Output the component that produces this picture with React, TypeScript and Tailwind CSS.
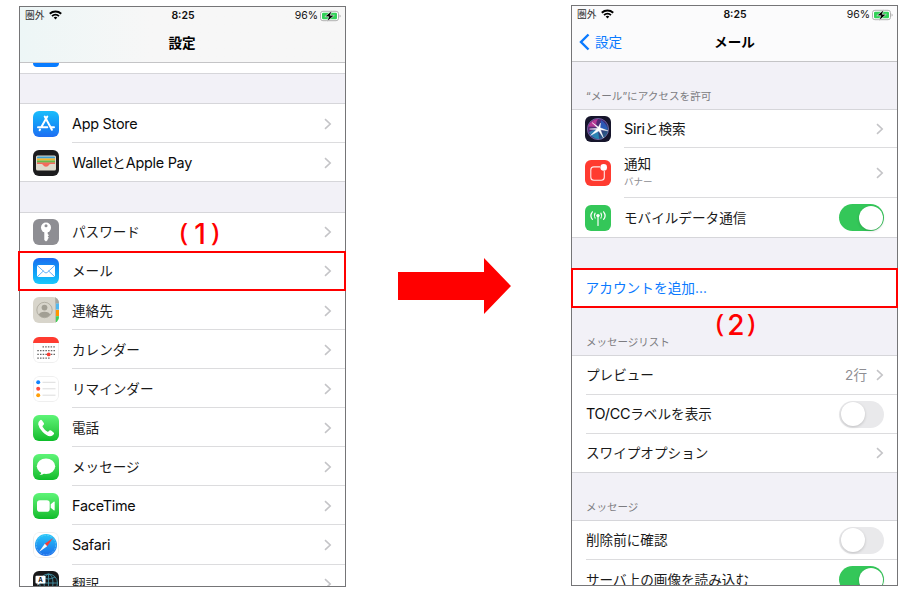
import type { ReactNode } from 'react';

const FONT = "font-['Inter','Noto_Sans_CJK_JP',sans-serif]";

/* ---------- Text ---------- */

// Latin runs are set slightly larger than the Japanese ones
function Label({ text }: { text: string }) {
  const runs = text.match(/[\x20-\x7e]+|[^\x20-\x7e]+/g) || [];
  return (
    <span className="whitespace-nowrap leading-[20px] text-[13.6px] text-[#1a1a1a]">
      {runs.map((run, i) => (
        <span key={i} className={/^[\x20-\x7e]/.test(run) ? 'text-[14.4px] tracking-[-0.25px] text-[#0c0c0c]' : ''}>
          {run}
        </span>
      ))}
    </span>
  );
}

/* ---------- Small parts ---------- */

function Chevron() {
  return (
    <svg width="8" height="12" viewBox="0 0 8 12" fill="none" className="shrink-0">
      <path d="M1 1.200 6.200 6 1 10.800" stroke="#c4c4c7" strokeWidth="1.600" />
    </svg>
  );
}

function Toggle({ on = false }: { on?: boolean }) {
  return (
    <span
      className={
        on
          ? 'flex h-[27px] w-[45px] shrink-0 items-center justify-end rounded-full bg-[#34c759] p-[1.5px]'
          : 'flex h-[27px] w-[45px] shrink-0 items-center rounded-full bg-[#e9e9eb] p-[1.5px]'
      }
    >
      <span className="size-[24px] rounded-full bg-white shadow-[0_1px_3px_rgba(0,0,0,0.18)]" />
    </span>
  );
}

function StatusBar() {
  return (
    <div className="flex h-[17px] items-center justify-between pl-[5px] pr-[4px] pt-px text-[10.5px] leading-none text-[#111]">
      <div className="flex w-[60px] items-center gap-[4px]">
        <span className="text-[9.8px] text-[#333]">圏外</span>
        <svg width="13" height="10" viewBox="0 0 13 10" fill="none" stroke="#000" className="-mt-px">
          <path d="M.8 3.7a8.4 8.4 0 0 1 11.4 0" strokeWidth="2" />
          <path d="M3 6.1a5.2 5.2 0 0 1 7 0" strokeWidth="1.8" />
          <path d="M4.7 7.6a2.6 2.6 0 0 1 3.6 0L6.5 9.6z" fill="#000" stroke="none" />
        </svg>
      </div>
      <span className="pt-px font-semibold">8:25</span>
      <div className="flex w-[60px] items-center justify-end gap-[2px]">
        <span className="pt-px">96%</span>
        <svg width="21" height="12" viewBox="0 0 21 12" className="-mt-px">
          <rect x=".5" y="1.3" width="18" height="9.4" rx="2.4" fill="#fff" stroke="#b0b0b0" />
          <rect x="2" y="2.8" width="15" height="6.4" rx="1.2" fill="#32d158" />
          <path d="M19.6 4.5v3q1-.5 1-1.5T19.6 4.5" fill="#a5a5a5" />
          <path d="M12 .5 4.8 6.7h3.9L7 11.7l7.3-6.4h-4z" fill="#000" stroke="#fff" strokeWidth=".6" />
        </svg>
      </div>
    </div>
  );
}

/* ---------- App icons ---------- */

function Icon({ children, className = '' }: { children: ReactNode; className?: string }) {
  return (
    <svg viewBox="0 0 26 26" className={`size-[26px] shrink-0 overflow-hidden rounded-[6px] ${className}`}>
      {children}
    </svg>
  );
}

const AppStoreIcon = () => (
  <Icon className="bg-linear-to-b from-[#1bbdfb] to-[#1f6df2]">
    <g stroke="#fff" strokeWidth="2" strokeLinecap="round" fill="none">
      <path d="M14.3 5.6 8.2 16.2M11.7 5.6l7.2 13.2M5 16.2h9.3M18.2 16.2h2.8M7 18.5l-.4.7" />
    </g>
  </Icon>
);

const WalletIcon = () => (
  <Icon className="bg-[#1c1c1e]">
    <rect x="3" y="5.5" width="20" height="15" rx="1.5" fill="#dedacd" />
    <path d="M4 8.5V7.5q0-1 1-1h16q1 0 1 1v1z" fill="#3f9fd2" />
    <path d="M4 8.5h18v2H4z" fill="#f3b52b" />
    <path d="M4 10.5h18v2.2H4z" fill="#67b84b" />
    <path d="M4 12.5h18V14h-4.500q-1 0-1.500 1-1 1.800-3 1.800t-3-1.800q-.5-1-1.500-1H4z" fill="#f2695c" />
  </Icon>
);

const KeyIcon = () => (
  <Icon className="bg-[#8e8e93]">
    <circle cx="13" cy="8.6" r="5" fill="#fff" />
    <path d="M11.3 12h3.4v3l1.3 1.2-1.3 1.3 1.2 1.3-1.2 1.300v.9L13 22.600 11.300 21z" fill="#fff" />
    <circle cx="13" cy="6.7" r="1.5" fill="#8e8e93" />
  </Icon>
);

const MailIcon = () => (
  <Icon className="bg-linear-to-b from-[#1c6cf0] to-[#1bc8fb]">
    <rect x="4" y="7" width="18" height="12" rx="1.8" fill="#fff" />
    <path d="m4.6 7.8 7.3 6.7q1.1.9 2.2 0l7.3-6.7M4.6 18.4l6-5.6M21.4 18.4l-6-5.6" fill="none" stroke="#3d9df6" strokeWidth=".8" />
  </Icon>
);

const ContactsIcon = () => (
  <Icon className="bg-[#d8d5cb]">
    <circle cx="11.5" cy="13" r="7.7" fill="#d8d5cb" stroke="#a29f94" strokeWidth=".7" />
    <circle cx="11.5" cy="10.6" r="2.9" fill="#a29f94" />
    <path d="M5.8 17.8q1-3 5.700-3t5.700 3q-2.200 2.700-5.700 2.700t-5.700-2.700" fill="#a29f94" />
    <path d="M22 0h4v6.5h-4z" fill="#a6a69f" />
    <path d="M22.7 6.5H26v6h-3.3z" fill="#51b8f0" />
    <path d="M22.7 12.9H26v6h-3.3z" fill="#ff9500" />
    <path d="M22.7 19.3H26V26h-3.3z" fill="#3fd158" />
    <path d="M22 0h.7v26H22z" fill="#bbb8ae" />
  </Icon>
);

const CalendarIcon = () => (
  <Icon className="bg-white">
    <rect x=".5" y=".5" width="25" height="25" rx="5.5" fill="#fff" stroke="#efefef" />
    <path d="M0 0h26v6H0z" fill="#ff3b30" />
    <g stroke="#666" strokeWidth="1.3" strokeDasharray="1.5 1.2">
      <path d="M9.5 9.8H22M4.3 13.6H22M4.3 17.4H22M4.3 21.2h12.5" />
    </g>
    <circle cx="15.7" cy="17.4" r="1.9" fill="#ff3b30" />
  </Icon>
);

const RemindersIcon = () => (
  <Icon className="bg-white">
    <rect x=".5" y=".5" width="25" height="25" rx="5.5" fill="#fff" stroke="#efefef" />
    <path d="M9.5 6.3h13M9.5 12.8h13M9.5 19.2h13" stroke="#dcdcdc" strokeWidth="1" />
    <circle cx="5.2" cy="6.3" r="2" fill="#1283ff" />
    <circle cx="5.2" cy="12.8" r="2" fill="#ff4b40" />
    <circle cx="5.2" cy="19.2" r="2" fill="#ff9f0a" />
  </Icon>
);

const PhoneIcon = () => (
  <Icon className="bg-linear-to-b from-[#5df577] to-[#0abc29]">
    <path
      d="M7.1 5.2q1-.8 1.900.2l1.800 2.600q.6 1-.2 1.800l-.9.9q-.4.6 0 1.300 1.700 2.800 4.400 4.500.7.400 1.300 0l1-.9q.8-.6 1.700 0l2.500 1.800q1 .8.200 1.800-1.600 2-3.700 2-3.400-.3-7.400-4.300T5.200 9.200q-.1-2.300 1.900-4"
      fill="#fff"
    />
  </Icon>
);

const MessagesIcon = () => (
  <Icon className="bg-linear-to-b from-[#5df577] to-[#0abc29]">
    <ellipse cx="13" cy="12.3" rx="9.2" ry="7.8" fill="#fff" />
    <path d="M8.5 17.5q0 2.300-2 3.500 3 .2 5-2z" fill="#fff" />
  </Icon>
);

const FaceTimeIcon = () => (
  <Icon className="bg-linear-to-b from-[#5df577] to-[#0abc29]">
    <rect x="4" y="7.3" width="12.7" height="11.4" rx="2.8" fill="#fff" />
    <path d="m17.7 11.3 3-2.5q1-.6 1 .5v7.400q0 1.100-1 .5l-3-2.500z" fill="#fff" />
  </Icon>
);

const SafariIcon = () => (
  <Icon className="bg-white">
    <defs>
      <linearGradient id="safari" x1="0" y1="0" x2="0" y2="1">
        <stop offset="0" stopColor="#25c8f9" />
        <stop offset="1" stopColor="#1b6bea" />
      </linearGradient>
    </defs>
    <rect x=".5" y=".5" width="25" height="25" rx="5.5" fill="#fff" stroke="#efefef" />
    <circle cx="13" cy="13" r="11" fill="url(#safari)" />
    <circle cx="13" cy="13" r="9.7" fill="none" stroke="#9fdcfb" strokeWidth=".9" strokeDasharray=".5 1.1" />
    <path d="M20 6 11.8 11.8l2.4 2.4z" fill="#fb3e35" />
    <path d="m6 20 8.2-5.8-2.4-2.4z" fill="#f6f6f6" />
  </Icon>
);

const TranslateIcon = () => (
  <Icon className="bg-[#19191b]">
    <g fill="none" stroke="#4a9fb5" strokeWidth=".8">
      <circle cx="15.5" cy="12" r="9" />
      <path d="M15.5 3v18M6.5 12h18M9 6q6.500 4 13 0M9 18q6.500-4 13 0" />
      <ellipse cx="15.5" cy="12" rx="4.5" ry="9" />
    </g>
    <path d="M3.5 4.800h8q1 0 1 1v5.700q0 1-1 1h-5l-2 2v-2h-1q-1 0-1-1V5.800q0-1 1-1" fill="#fff" />
    <text x="5.3" y="10.8" fontSize="6" fontWeight="700" fill="#111">A</text>
  </Icon>
);

const SiriIcon = () => (
  <Icon className="bg-[#16152b]">
    <defs>
      <linearGradient id="siri" x1="0" y1="0" x2="1" y2="1">
        <stop offset="0" stopColor="#d53cab" />
        <stop offset=".5" stopColor="#5b3bb4" />
        <stop offset="1" stopColor="#20c9dd" />
      </linearGradient>
    </defs>
    <circle cx="13" cy="13" r="10.6" fill="url(#siri)" fillOpacity=".55" stroke="#7b6cae" strokeWidth=".8" />
    <path d="M3.200 10.500Q6 3.500 13 3q-3 4-1 8z" fill="#dc3fa4" fillOpacity=".7" />
    <path d="M22.800 13.500Q21 7 16 4q0 5-3 9z" fill="#266bd1" fillOpacity=".7" />
    <path d="M4 16q4-2 9-3l1 10q-7 0-10-7" fill="#25b5d8" fillOpacity=".6" />
    <path
      d="M12.800 12.200 7 6.500l6.500 4.500L15.500 7l-.4 4.800 7.900 3-7.500-1 3 8.200-4.700-7-8.300 4.500 6-6-7-.4z"
      fill="#fff"
      stroke="#fff"
      strokeWidth=".4"
    />
  </Icon>
);

const NotificationIcon = () => (
  <Icon className="bg-[#ff3b30]">
    <path d="M15 6.900H8.800q-3 0-3 3v7.300q0 3 3 3h7.500q3 0 3-3V11" fill="none" stroke="#fff" strokeOpacity=".9" strokeWidth="1.100" />
    <circle cx="18.700" cy="7.400" r="3.300" fill="#fff" />
  </Icon>
);

const AntennaIcon = () => (
  <Icon className="bg-[#34c759]">
    <g fill="none" stroke="#fff" strokeWidth="1.200" strokeLinecap="round">
      <path d="M13 11v9.500M10.100 8.200q-1.600 2.400 0 4.800M15.900 8.200q1.600 2.400 0 4.800M7.400 6.800q-3 3.800 0 7.600M18.600 6.800q3 3.800 0 7.600" />
    </g>
    <circle cx="13" cy="10.600" r="1.700" fill="#fff" />
  </Icon>
);

/* ---------- Rows ---------- */

interface AppRowProps {
  icon: ReactNode;
  text: string;
  last?: boolean;
}

function AppRow({ icon, text, last }: AppRowProps) {
  return (
    <div className="flex h-[39.1px] gap-[13px] pl-[13px]">
      <div className="flex items-center">{icon}</div>
      <div
        className={
          last
            ? 'flex flex-1 items-center justify-between pr-[13px]'
            : 'flex flex-1 items-center justify-between border-b border-[#dcdcde] pr-[13px] pt-[1.200px]'
        }
      >
        <Label text={text} />
        <Chevron />
      </div>
    </div>
  );
}

function Phone({ children }: { children: ReactNode }) {
  return (
    <div className="h-[581px] w-[327px] overflow-hidden border border-[#757577] bg-white">{children}</div>
  );
}

const apps = [
  { icon: <KeyIcon />, text: 'パスワード' },
  { icon: <MailIcon />, text: 'メール' },
  { icon: <ContactsIcon />, text: '連絡先' },
  { icon: <CalendarIcon />, text: 'カレンダー' },
  { icon: <RemindersIcon />, text: 'リマインダー' },
  { icon: <PhoneIcon />, text: '電話' },
  { icon: <MessagesIcon />, text: 'メッセージ' },
  { icon: <FaceTimeIcon />, text: 'FaceTime' },
  { icon: <SafariIcon />, text: 'Safari' },
  { icon: <TranslateIcon />, text: '翻訳' },
];

function Marker({ n }: { n: string }) {
  return (
    <span className="flex items-center whitespace-nowrap leading-none text-[#ff0000]">
      <span className="w-[10px] pb-[5px] font-['Noto_Sans',sans-serif] text-[26px] font-medium">(</span>
      <span className="w-[20px] text-center text-[28px] font-medium">{n}</span>
      <span className="flex w-[9px] justify-end pb-[5px] font-['Noto_Sans',sans-serif] text-[26px] font-medium">)</span>
    </span>
  );
}

function SettingsScreen() {
  return (
    <Phone>
      <div className="h-[56px] border-b border-[#c4c4c6] bg-[#f7f7f7] bg-linear-to-r from-[#edf6f6] via-[#f7f7f7] via-40% to-[#f7f7f7]">
        <StatusBar />
        <div className="flex h-[38px] items-center justify-center pr-px text-[13.6px] font-bold text-black">設定</div>
      </div>
      <div className="flex h-[11px] items-start border-b border-[#d6d6da] pl-[13px]">
        <div className="h-[4px] w-[26px] rounded-b-[5px] bg-[#087cff]" />
      </div>
      <div className="h-[30px] border-b border-[#d6d6da] bg-[#f2f1f7]" />
      <AppRow icon={<AppStoreIcon />} text="App Store" />
      <AppRow icon={<WalletIcon />} text="WalletとApple Pay" last />
      <div className="-mt-px h-[31.5px] border-y border-[#d6d6da] bg-[#f2f1f7]" />
      {apps.map((app) => (
        <AppRow key={app.text} icon={app.icon} text={app.text} />
      ))}
    </Phone>
  );
}

function MailScreen() {
  return (
    <Phone>
      <div className="h-[56px] border-b border-[#c4c4c6] bg-[#fbfbfc]">
        <StatusBar />
        <div className="grid h-[38px] grid-cols-3 items-center pl-[7px] pr-[7px] text-[13.6px]">
          <div className="flex items-center gap-[5px] text-[#0a7aff]">
            <svg width="11" height="18" viewBox="0 0 11 18" fill="none">
              <path d="M9.5 1.5 2 9l7.500 7.500" stroke="#0a7aff" strokeWidth="2.400" />
            </svg>
            設定
          </div>
          <div className="text-center font-bold text-black">メール</div>
        </div>
      </div>

      {/* Access */}
      <div className="flex h-[48px] items-end border-b border-[#d6d6da] bg-[#f2f1f7] pb-[4px] pl-[14px] text-[10.6px] leading-[16px] text-[#7c7c81]">
        “メール”にアクセスを許可
      </div>
      <div className="flex h-[38px] gap-[13px] pl-[13px]">
        <div className="flex items-center"><SiriIcon /></div>
        <div className="flex flex-1 items-center justify-between border-b border-[#dcdcde] pr-[13px]">
          <Label text="Siriと検索" />
          <Chevron />
        </div>
      </div>
      <div className="flex h-[50px] gap-[13px] pl-[13px]">
        <div className="flex items-center"><NotificationIcon /></div>
        <div className="flex flex-1 items-center justify-between border-b border-[#dcdcde] pr-[13px]">
          <div className="-mt-px flex flex-col">
            <Label text="通知" />
            <span className="text-[9.5px] leading-[16px] text-[#8e8e93]">バナー</span>
          </div>
          <Chevron />
        </div>
      </div>
      <div className="flex h-[39px] items-center gap-[13px] pl-[13px] pr-[13px]">
        <AntennaIcon />
        <div className="flex flex-1 items-center justify-between">
          <Label text="モバイルデータ通信" />
          <Toggle on />
        </div>
      </div>

      {/* Add account */}
      <div className="h-[32px] border-y border-[#d6d6da] bg-[#f2f1f7]" />
      <div className="flex h-[38px] items-center pl-[13.5px] text-[13.7px] text-[#0a7aff]">アカウントを追加...</div>

      {/* Message list */}
      <div className="flex h-[49px] items-end border-y border-[#d6d6da] bg-[#f2f1f7] pb-[4px] pl-[14px] text-[10.5px] leading-[16px] text-[#7c7c81]">
        メッセージリスト
      </div>
      <div className="pl-[14px]">
        <div className="flex h-[39px] items-center justify-between border-b border-[#dcdcde] pr-[13px]">
          <Label text="プレビュー" />
          <div className="flex items-center gap-[9px] text-[13.6px] text-[#8e8e93]">
            2行
            <Chevron />
          </div>
        </div>
        <div className="flex h-[39px] items-center justify-between border-b border-[#dcdcde] pr-[13px]">
          <Label text="TO/CCラベルを表示" />
          <Toggle />
        </div>
        <div className="flex h-[38px] items-center justify-between pr-[13px]">
          <Label text="スワイプオプション" />
          <Chevron />
        </div>
      </div>

      {/* Messages */}
      <div className="flex h-[49px] items-end border-y border-[#d6d6da] bg-[#f2f1f7] pb-[4px] pl-[14px] text-[10.5px] leading-[16px] text-[#7c7c81]">
        メッセージ
      </div>
      <div className="pl-[14px]">
        <div className="flex h-[39px] items-center justify-between border-b border-[#dcdcde] pr-[13px]">
          <Label text="削除前に確認" />
          <Toggle />
        </div>
        <div className="flex h-[39px] items-center justify-between pr-[13px]">
          <Label text="サーバ上の画像を読み込む" />
          <Toggle on />
        </div>
      </div>
    </Phone>
  );
}

export default function App() {
  return (
    <main className={`flex h-[590px] w-[919px] items-start overflow-hidden bg-white pl-[19px] ${FONT}`}>
      <div className="relative mt-[6px]">
        <SettingsScreen />
        <div className="absolute -left-px top-[245px] h-[40px] w-[328px] border-2 border-[#ff0000]" />
        <div className="absolute left-[161px] top-[212px]">
          <Marker n="1" />
        </div>
      </div>

      <svg width="113" height="56" viewBox="0 0 113 56" className="ml-[52px] mt-[258px] shrink-0">
        <path d="M0 14h86V0l27 28-27 28V42H0z" fill="#ff0000" />
      </svg>

      <div className="relative ml-[60px] mt-[5px]">
        <MailScreen />
        <div className="absolute left-0 top-[263px] h-[40px] w-[327px] border-2 border-[#ff0000]" />
        <div className="absolute left-[145px] top-[304px]">
          <Marker n="2" />
        </div>
      </div>
    </main>
  );
}
